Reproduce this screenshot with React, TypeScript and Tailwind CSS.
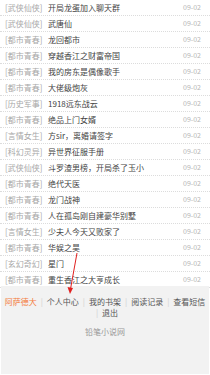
import React from 'react';

interface Book {
  cat: string;
  title: string;
  date: string;
}

const books: Book[] = [
  { cat: '武侠仙侠', title: '开局龙蛋加入聊天群', date: '09-02' },
  { cat: '武侠仙侠', title: '武唐仙', date: '09-02' },
  { cat: '都市青春', title: '龙回都市', date: '09-02' },
  { cat: '都市青春', title: '穿越香江之财富帝国', date: '09-02' },
  { cat: '都市青春', title: '我的房东是偶像歌手', date: '09-02' },
  { cat: '都市青春', title: '大佬级炮灰', date: '09-02' },
  { cat: '历史军事', title: '1918远东战云', date: '09-02' },
  { cat: '都市青春', title: '绝品上门女婿', date: '09-02' },
  { cat: '言情女生', title: '方sir，离婚请签字', date: '09-02' },
  { cat: '科幻灵异', title: '异世界征服手册', date: '09-02' },
  { cat: '武侠仙侠', title: '斗罗渣男榜，开局杀了玉小', date: '09-02' },
  { cat: '都市青春', title: '绝代天医', date: '09-02' },
  { cat: '都市青春', title: '龙门战神', date: '09-02' },
  { cat: '都市青春', title: '人在孤岛刚自建豪华别墅', date: '09-02' },
  { cat: '言情女生', title: '少夫人今天又败家了', date: '09-02' },
  { cat: '都市青春', title: '华娱之昊', date: '09-02' },
  { cat: '玄幻奇幻', title: '星门', date: '09-02' },
  { cat: '都市青春', title: '重生香江之大亨成长', date: '09-02' },
];

const navItems = ['个人中心', '我的书架', '阅读记录', '查看短信', '退出'];

const App: React.FC = () => {
  return (
    <div
      className="relative w-[210px] h-[375px] bg-white overflow-hidden"
      style={{ fontFamily: '"Noto Sans CJK SC", "Noto Sans", sans-serif' }}
    >
      {/* book list */}
      <ul>
        {books.map((b, i) => (
          <li
            key={i}
            className="flex items-center h-[16px] px-[5px] border-b border-dotted border-[#dcdcdc] text-[8px] leading-[15px]"
          >
            <span className="text-[#a8a8a8] w-[43px] shrink-0 whitespace-nowrap">[{b.cat}]</span>
            <span className="flex-1 text-[#444] whitespace-nowrap">{b.title}</span>
            <span className="text-[#b5b5b5] text-[7px] pr-[4px]">{b.date}</span>
          </li>
        ))}
      </ul>

      {/* footer */}
      <div className="mx-[1px] mt-[-2px] h-[88px] bg-[#f2f2f2] pt-[10px]">
        <div className="text-center text-[8px] leading-[11px] text-[#555] px-[3px]">
          <span className="inline-block text-[#f47c3c]">阿萨德大</span>
          {navItems.map((n) => (
            <span key={n} className="inline-block whitespace-nowrap">
              <span className="text-[#d0d0d0] mx-[4px]">|</span>
              {n}
            </span>
          ))}
        </div>
        <div className="text-center text-[8px] text-[#999] mt-[8px]">铅笔小说网</div>
      </div>

      {/* red annotation arrow */}
      <svg className="absolute left-0 top-0 pointer-events-none" width="210" height="375">
        <line x1="77" y1="253" x2="70.5" y2="289" stroke="#e02020" strokeWidth="1" />
        <polygon points="70,294 67.5,287 73,288" fill="#e02020" />
      </svg>
    </div>
  );
};

export default App;
